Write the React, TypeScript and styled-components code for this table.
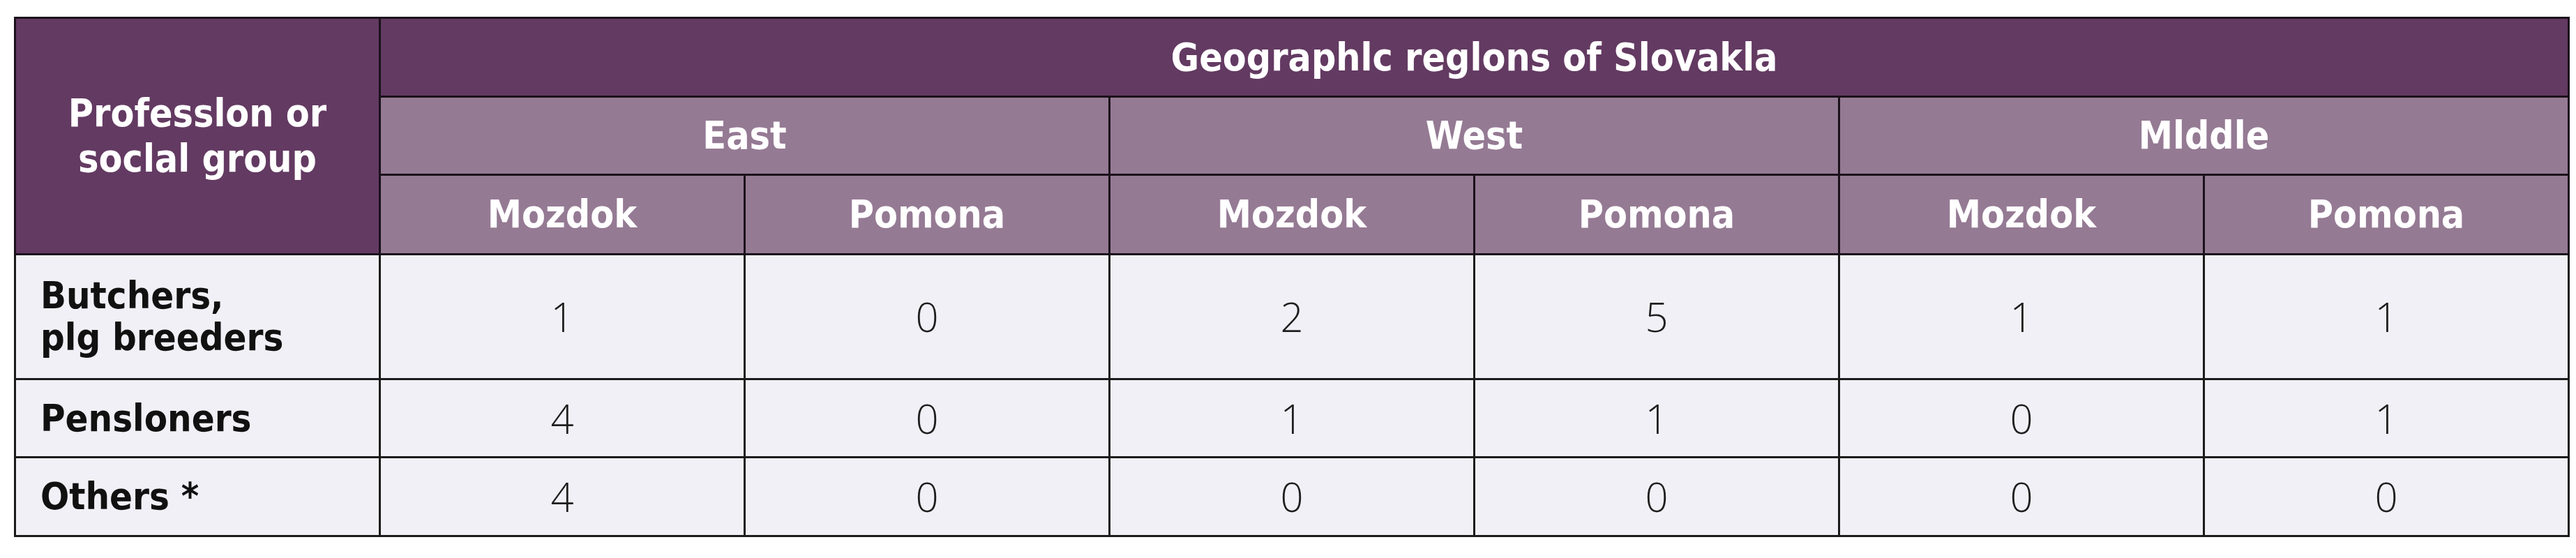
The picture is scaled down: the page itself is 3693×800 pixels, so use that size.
import React from "react";
import styled, { createGlobalStyle } from "styled-components";

const GlobalStyle = createGlobalStyle`
  html, body {
    margin: 0;
    padding: 0;
    background: #ffffff;
  }
`;

const Page = styled.div`
  padding: 24px 10px 0 20px;
`;

const Table = styled.table`
  border-collapse: collapse;
  table-layout: fixed;
  width: 3662px;
  border: 3px solid #1b161b;
`;

const Col = styled.col`
  width: 523px;
`;

const Row = styled.tr<{ $h: number }>`
  height: ${(p) => p.$h}px;
`;

const HeadCell = styled.th<{ $tone: "dark" | "mid" }>`
  background: ${(p) => (p.$tone === "dark" ? "#633a62" : "#957a94")};
  color: #ffffff;
  border: 3px solid #1b111b;
  padding: 0;
  text-align: center;
  vertical-align: middle;
  font-family: "DejaVu Sans Condensed", "DejaVu Sans", sans-serif;
  font-stretch: semi-condensed;
  font-weight: 700;
  font-size: 55px;
  line-height: 65px;
`;

const LabelCell = styled.th`
  background: #f1f0f6;
  color: #111111;
  border: 3px solid #1b1b1b;
  padding: 0 0 0 35px;
  text-align: left;
  vertical-align: middle;
  font-family: "DejaVu Sans Condensed", "DejaVu Sans", sans-serif;
  font-stretch: semi-condensed;
  font-weight: 700;
  font-size: 54px;
  line-height: 60px;
`;

const NumCell = styled.td`
  background: #f1f0f6;
  color: #1e1e1e;
  border: 3px solid #1b1b1b;
  padding: 0;
  text-align: center;
  vertical-align: middle;
  font-family: "Open Sans", "Roboto", "DejaVu Sans", sans-serif;
  font-weight: 300;
  font-size: 58px;
  line-height: 60px;
`;

type DataRow = { label: React.ReactNode; values: number[]; h: number };

const rows: DataRow[] = [
  {
    label: (
      <>
        Butchers,
        <br />
        plg breeders
      </>
    ),
    values: [1, 0, 2, 5, 1, 1],
    h: 179,
  },
  { label: "Pensloners", values: [4, 0, 1, 1, 0, 1], h: 112 },
  { label: "Others *", values: [4, 0, 0, 0, 0, 0], h: 113 },
];

const regions = ["East", "West", "Mlddle"];

export default function App() {
  return (
    <>
      <GlobalStyle />
      <Page>
        <Table>
          <colgroup>
            {Array.from({ length: 7 }).map((_, i) => (
              <Col key={i} />
            ))}
          </colgroup>
          <thead>
            <Row $h={113}>
              <HeadCell $tone="dark" rowSpan={3}>
                Professlon or
                <br />
                soclal group
              </HeadCell>
              <HeadCell $tone="dark" colSpan={6}>
                Geographlc reglons of Slovakla
              </HeadCell>
            </Row>
            <Row $h={112}>
              {regions.map((r) => (
                <HeadCell key={r} $tone="mid" colSpan={2}>
                  {r}
                </HeadCell>
              ))}
            </Row>
            <Row $h={114}>
              {regions.map((r) => (
                <React.Fragment key={r}>
                  <HeadCell $tone="mid">Mozdok</HeadCell>
                  <HeadCell $tone="mid">Pomona</HeadCell>
                </React.Fragment>
              ))}
            </Row>
          </thead>
          <tbody>
            {rows.map((row, i) => (
              <Row key={i} $h={row.h}>
                <LabelCell>{row.label}</LabelCell>
                {row.values.map((v, j) => (
                  <NumCell key={j}>{v}</NumCell>
                ))}
              </Row>
            ))}
          </tbody>
        </Table>
      </Page>
    </>
  );
}
